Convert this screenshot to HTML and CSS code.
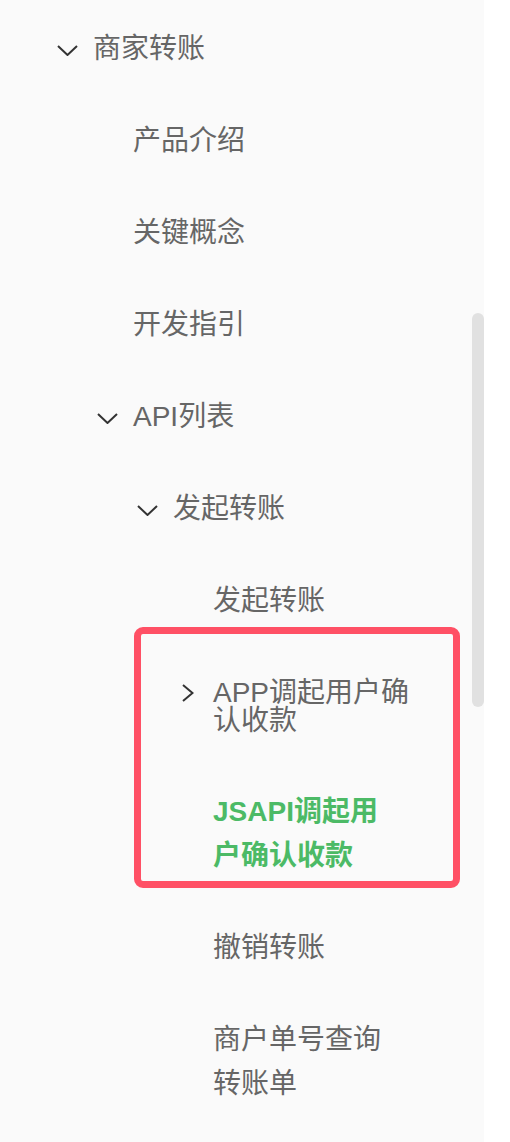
FILE: index.html
```html
<!DOCTYPE html>
<html lang="zh-CN">
<head>
<meta charset="utf-8">
<title>商家转账</title>
<link rel="stylesheet" href="styles.css">
</head>
<body>
<div class="panel">
  <nav class="tree">
    <div class="row l0">
      <span class="twisty"><svg class="caret-down" viewBox="0 0 21 11"><path d="M1 1 L10.5 10 L20 1"/></svg></span>
      <span class="label">商家转账</span>
    </div>
    <div class="row l1"><span class="twisty"></span><span class="label">产品介绍</span></div>
    <div class="row l1"><span class="twisty"></span><span class="label">关键概念</span></div>
    <div class="row l1"><span class="twisty"></span><span class="label">开发指引</span></div>
    <div class="row l1">
      <span class="twisty"><svg class="caret-down" viewBox="0 0 21 11"><path d="M1 1 L10.5 10 L20 1"/></svg></span>
      <span class="label">API列表</span>
    </div>
    <div class="row l2">
      <span class="twisty"><svg class="caret-down" viewBox="0 0 21 11"><path d="M1 1 L10.5 10 L20 1"/></svg></span>
      <span class="label">发起转账</span>
    </div>
    <div class="row l3"><span class="twisty"></span><span class="label leaf">发起转账</span></div>
    <div class="highlight-group">
      <div class="row l3 compact">
        <span class="twisty"><svg class="caret-right" viewBox="0 0 12 18"><path d="M1 1 L10.5 9 L1 17"/></svg></span>
        <span class="label wide">APP调起用户确认收款</span>
      </div>
      <div class="row l3 active"><span class="twisty"></span><span class="label leaf">JSAPI调起用户确认收款</span></div>
    </div>
    <div class="row l3"><span class="twisty"></span><span class="label leaf">撤销转账</span></div>
    <div class="row l3"><span class="twisty"></span><span class="label leaf">商户单号查询转账单</span></div>
  </nav>
  <div class="scrollbar"><div class="thumb"></div></div>
</div>
</body>
</html>
```
FILE: styles.css
```css
html, body {
  margin: 0;
  padding: 0;
  background: #ffffff;
}

body {
  font-family: "Liberation Sans", "Noto Sans CJK SC", sans-serif;
  font-size: 28px;
  color: #666666;
}

.panel {
  display: flex;
  width: 484px;
  height: 1142px;
  background: #fafafa;
  overflow: hidden;
}

.tree {
  flex: 1;
  padding-top: 3px;
}

.row {
  display: flex;
  align-items: flex-start;
  padding-top: 24px;
  padding-bottom: 24px;
  line-height: 44px;
}

.l0 { padding-left: 57px; }
.l1 { padding-left: 97px; }
.l2 { padding-left: 137px; }
.l3 { padding-left: 177px; }

.twisty {
  flex: none;
  width: 36px;
  height: 44px;
  display: flex;
  align-items: center;
}

.label {
  min-width: 0;
}

.leaf {
  max-width: 180px;
}

.wide {
  max-width: 205px;
}

.caret-down {
  width: 21px;
  height: 11px;
  margin-top: 3px;
  fill: none;
  stroke: #333333;
  stroke-width: 2;
}

.caret-right {
  width: 12px;
  height: 18px;
  margin-left: 5px;
  fill: none;
  stroke: #333333;
  stroke-width: 2;
}

.compact {
  padding-top: 32px;
  padding-bottom: 32px;
  line-height: 27.5px;
}

.compact .twisty {
  height: 27.5px;
}

.active .label {
  color: #4cba66;
  font-weight: 700;
}

.highlight-group {
  position: relative;
}

.highlight-group::after {
  content: "";
  position: absolute;
  top: -20px;
  left: 134px;
  width: 326px;
  height: 261px;
  box-sizing: border-box;
  border: 7px solid #ff5065;
  border-radius: 9px;
  pointer-events: none;
}

.scrollbar {
  flex: none;
  width: 12px;
  padding-top: 313px;
}

.thumb {
  height: 394px;
  border-radius: 6px;
  background: #e1e1e1;
}
```
